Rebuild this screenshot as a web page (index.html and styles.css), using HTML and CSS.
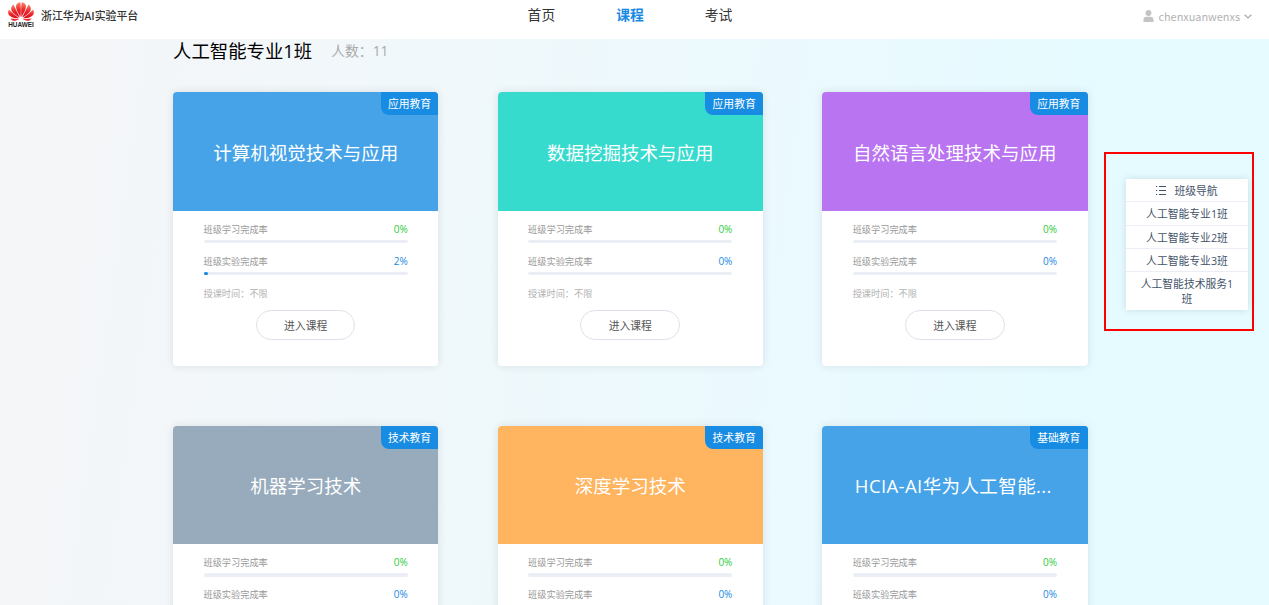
FILE: index.html
```
<!DOCTYPE html>
<html lang="zh-CN">
<head>
  <meta charset="UTF-8" />
  <meta name="viewport" content="width=device-width, initial-scale=1.0" />
  <title>浙江华为AI实验平台</title>
  <link rel="stylesheet" href="styles.css">
</head>
<body>
  <header class="header">
    <div class="brand">
      <div class="logo">
        <svg class="logo-flower" viewBox="0 0 52 38">
          <defs>
            <linearGradient id="petal" x1="0" y1="0" x2="0" y2="1">
              <stop offset="0" stop-color="#f98a70" />
              <stop offset="0.5" stop-color="#ee2a2c" />
              <stop offset="1" stop-color="#d80c1c" />
            </linearGradient>
          </defs>
          <g fill="url(#petal)">
            <path d="M25 30C19 20 14 11 17 5C19 2 22 1 24.500 0C26 9 26 20 25 30Z" />
            <path d="M27 30C33 20 38 11 35 5C33 2 30 1 27.500 0C26 9 26 20 27 30Z" />
            <path d="M23.500 31C20 23 15 14 11 5C7 8 5 12 7 17C10 23 17 28 23.500 31Z" />
            <path d="M28.500 31C32 23 37 14 41 5C45 8 47 12 45 17C42 23 35 28 28.500 31Z" />
            <path d="M22.500 32.500C15 28 8 21 2 15C-1 20 0 25 4 28C9 32 16 32.500 22.500 32.500Z" />
            <path d="M29.500 32.500C37 28 44 21 50 15C53 20 52 25 48 28C43 32 36 32.500 29.500 32.500Z" />
            <path d="M22.500 34C16 34 10 33.500 5 32.500C7 37 11 38 14 37.500C17 37 20 35.500 22.500 34Z" />
            <path d="M29.500 34C36 34 42 33.500 47 32.500C45 37 41 38 38 37.500C35 37 32 35.500 29.500 34Z" />
          </g>
        </svg>
        <span class="logo-text">HUAWEI</span>
      </div>
      <span class="brand-name">浙江华为AI实验平台</span>
    </div>
    <nav class="menu">
      <a class="menu-item">首页</a>
      <a class="menu-item active">课程</a>
      <a class="menu-item">考试</a>
    </nav>
    <div class="user">
      <svg class="user-icon" viewBox="0 0 12 13">
        <circle cx="6" cy="3.200" r="3.200" />
        <path d="M0.500 13V10.500C0.500 8.500 2 7.200 3.800 7.200H8.200C10 7.200 11.500 8.500 11.500 10.500V13Z" />
      </svg>
      <span class="user-name">chenxuanwenxs</span>
      <svg class="arrow" viewBox="0 0 8 5"><path d="M0.600 0.700L4 4L7.400 0.700" /></svg>
    </div>
  </header>

  <main class="content">
    <div class="class-title">
      <h1>人工智能专业1班</h1>
      <span class="count">人数：11</span>
    </div>

    <div class="course-list">
      <div class="card">
        <div class="cover blue"><span class="tag">应用教育</span><h2>计算机视觉技术与应用</h2></div>
        <div class="info">
          <div class="rate"><span>班级学习完成率</span><b class="green">0%</b></div>
          <div class="bar"></div>
          <div class="rate"><span>班级实验完成率</span><b>2%</b></div>
          <div class="bar"><div class="bar-inner" style="width: 2%"></div></div>
          <p class="time">授课时间：不限</p>
          <button class="enter">进入课程</button>
        </div>
      </div>

      <div class="card">
        <div class="cover teal"><span class="tag">应用教育</span><h2>数据挖掘技术与应用</h2></div>
        <div class="info">
          <div class="rate"><span>班级学习完成率</span><b class="green">0%</b></div>
          <div class="bar"></div>
          <div class="rate"><span>班级实验完成率</span><b>0%</b></div>
          <div class="bar"></div>
          <p class="time">授课时间：不限</p>
          <button class="enter">进入课程</button>
        </div>
      </div>

      <div class="card">
        <div class="cover purple"><span class="tag">应用教育</span><h2>自然语言处理技术与应用</h2></div>
        <div class="info">
          <div class="rate"><span>班级学习完成率</span><b class="green">0%</b></div>
          <div class="bar"></div>
          <div class="rate"><span>班级实验完成率</span><b>0%</b></div>
          <div class="bar"></div>
          <p class="time">授课时间：不限</p>
          <button class="enter">进入课程</button>
        </div>
      </div>

      <div class="card">
        <div class="cover gray"><span class="tag">技术教育</span><h2>机器学习技术</h2></div>
        <div class="info">
          <div class="rate"><span>班级学习完成率</span><b class="green">0%</b></div>
          <div class="bar"></div>
          <div class="rate"><span>班级实验完成率</span><b>0%</b></div>
        </div>
      </div>

      <div class="card">
        <div class="cover orange"><span class="tag">技术教育</span><h2>深度学习技术</h2></div>
        <div class="info">
          <div class="rate"><span>班级学习完成率</span><b class="green">0%</b></div>
          <div class="bar"></div>
          <div class="rate"><span>班级实验完成率</span><b>0%</b></div>
        </div>
      </div>

      <div class="card">
        <div class="cover blue"><span class="tag">基础教育</span><h2 class="long">HCIA-AI华为人工智能...</h2></div>
        <div class="info">
          <div class="rate"><span>班级学习完成率</span><b class="green">0%</b></div>
          <div class="bar"></div>
          <div class="rate"><span>班级实验完成率</span><b>0%</b></div>
        </div>
      </div>
    </div>
  </main>

  <!-- Floating class navigation -->
  <aside class="side-frame">
    <ul class="side-nav">
      <li class="side-title">
        <svg class="list-icon" viewBox="0 0 10 9">
          <path d="M0 0.500H1.200M0 4.500H1.200M0 8.500H1.200M3 0.500H10M3 4.500H10M3 8.500H10" />
        </svg>
        班级导航
      </li>
      <li>人工智能专业1班</li>
      <li>人工智能专业2班</li>
      <li>人工智能专业3班</li>
      <li class="side-last">人工智能技术服务1班</li>
    </ul>
  </aside>
</body>
</html>
```
FILE: styles.css
```
* {
  box-sizing: border-box;
}
html {
  height: 100%;
  overflow: hidden;
}
body {
  display: flex;
  flex-direction: column;
  margin: 0;
  height: 100%;
  overflow: hidden;
  font-family: "Open Sans", "Noto Sans CJK SC", sans-serif;
  background: linear-gradient(98deg, #f5f6f8 3%, #f0f8fb 35%, #eafaff 65%, #e5fbff 85%);
}
h1, h2, p, ul {
  margin: 0;
  padding: 0;
  font-weight: 400;
}

/* header */
.header {
  display: grid;
  grid-template-columns: 1fr auto 1fr;
  flex: none;
  height: 38.5px;
  padding: 0 17px 0 8px;
  background-color: #fff;
}
.brand {
  display: flex;
  align-items: flex-start;
  gap: 7px;
}
.logo {
  display: flex;
  flex-direction: column;
  align-items: center;
  width: 26px;
  padding-top: 2px;
}
.logo-flower {
  width: 26px;
  height: 19px;
}
.logo-text {
  font: bold 6.4px/8px "Liberation Sans", sans-serif;
  color: #222;
}
.brand-name {
  font-family: "Noto Sans CJK SC", sans-serif;
  font-size: 10.9px;
  line-height: 31px;
  font-weight: 500;
  color: #333;
  white-space: nowrap;
}
.menu {
  display: flex;
  gap: 61px;
  font-size: 13.8px;
  line-height: 30px;
  color: #333;
}
.menu-item.active {
  color: #1989e3;
  font-weight: 700;
}
.user {
  display: flex;
  justify-content: flex-end;
  align-items: center;
  height: 31px;
  font-family: "Noto Sans CJK SC", sans-serif;
  font-size: 10.9px;
  color: #b2b2b2;
}
.user-icon {
  width: 11px;
  height: 12px;
  margin-right: 4px;
  fill: #c4c4c4;
}
.user-name {
  line-height: 30px;
}
.arrow {
  width: 8px;
  height: 5px;
  margin: 1px 0 0 4px;
  fill: none;
  stroke: #aaa;
  stroke-width: 1.2;
}

/* courses */
.content {
  flex: 1;
  min-height: 0;
  width: 934.5px;
  margin-left: 163px;
  padding: 0 10px;
  overflow: hidden;
}
.class-title {
  display: flex;
  align-items: center;
  gap: 19px;
  height: 53.500px;
  padding-bottom: 29px;
}
.class-title h1 {
  font-size: 18.4px;
  line-height: 24px;
  color: #000;
}
.count {
  font-size: 13.8px;
  line-height: 20px;
  color: #aaa;
}
.course-list {
  display: grid;
  grid-template-columns: repeat(3, 1fr);
  gap: 59.700px 59.300px;
}
.card {
  height: 274px;
  border-radius: 4px;
  background-color: #fff;
  box-shadow: 0 0 10px rgba(0, 0, 0, 0.1);
  overflow: hidden;
}
.cover {
  position: relative;
  display: flex;
  align-items: center;
  justify-content: center;
  height: 118.600px;
  color: #fff;
}
.cover h2 {
  font-size: 18.5px;
  line-height: 26px;
  white-space: nowrap;
  padding-top: 3px;
}
.cover .long {
  padding-right: 3px;
  letter-spacing: 0.4px;
}
.tag {
  position: absolute;
  top: 0;
  right: 0;
  width: 57.500px;
  height: 23px;
  border-bottom-left-radius: 8px;
  background-color: #188ce2;
  font-size: 10.8px;
  line-height: 23px;
  text-align: center;
}
.blue { background-color: #46a3e8; }
.teal { background-color: #37dbce; }
.purple { background-color: #b974f1; }
.gray { background-color: #98abbc; }
.orange { background-color: #ffb45f; }

.info {
  padding: 11px 30.500px 0;
  font-size: 9.2px;
}
.rate {
  display: flex;
  justify-content: space-between;
  line-height: 15px;
  margin-bottom: 3px;
  color: #999;
}
.rate b {
  font-size: 10px;
  font-weight: 400;
  color: #1989e3;
}
.rate .green {
  color: #2ecc40;
}
.bar {
  height: 3.500px;
  margin-bottom: 10.500px;
  border-radius: 2px;
  background-color: #ebeef5;
}
.bar-inner {
  height: 100%;
  border-radius: 2px;
  background-color: #1989e3;
}
.time {
  line-height: 15px;
  color: #b2b2b2;
}
.enter {
  display: block;
  width: 99.500px;
  height: 30px;
  margin: 9.500px auto 0;
  padding: 0 0 1px;
  border: 1px solid #dfe1ea;
  border-radius: 15px;
  background-color: #fff;
  font-family: inherit;
  font-size: 10.8px;
  color: #555;
}

/* side nav */
.side-frame {
  position: absolute;
  top: 151.500px;
  left: 1104px;
  width: 149.500px;
  height: 179.500px;
  padding: 25.500px 3.500px 0 20px;
  border: 2px solid #f00;
}
.side-nav {
  list-style: none;
  background-color: #fff;
  box-shadow: 0 0 8px rgba(0, 0, 0, 0.12);
  font-size: 10.8px;
  color: #44546a;
  text-align: center;
}
.side-nav li {
  height: 23.300px;
  padding: 0 14px;
  border-bottom: 1px solid #ebeef5;
  line-height: 23px;
}
.side-title {
  display: flex;
  align-items: center;
  justify-content: center;
  gap: 8px;
}
.list-icon {
  width: 10px;
  height: 9px;
  fill: none;
  stroke: #44546a;
}
.side-nav .side-last {
  height: 38px;
  padding-top: 4px;
  border-bottom: 0;
  line-height: 15px;
}
```
